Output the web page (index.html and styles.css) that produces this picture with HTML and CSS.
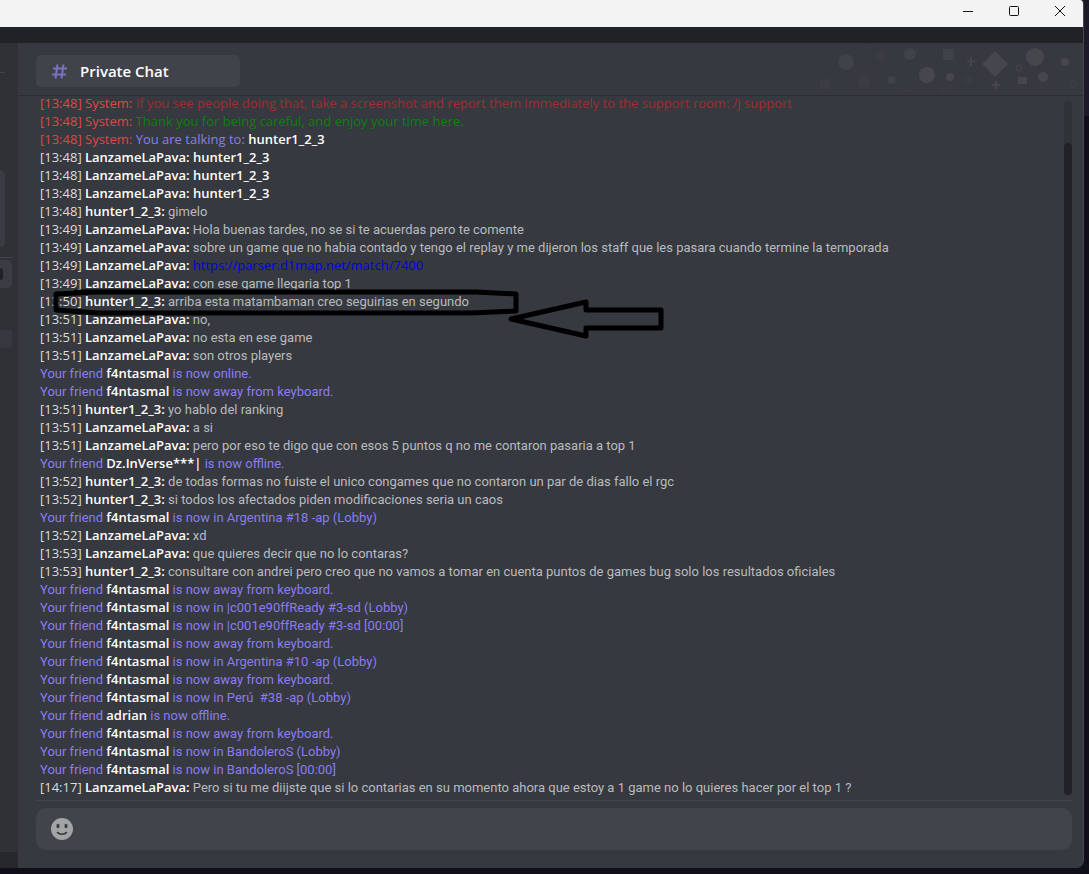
FILE: index.html
```html
<!DOCTYPE html>
<html lang="es">
<head>
    <meta charset="UTF-8">
    <meta name="viewport" content="width=device-width, initial-scale=1.0">
    <title>Private Chat</title>
    <link rel="stylesheet" href="styles.css">
</head>
<body>
    <div class="window">
        <div class="titlebar">
            <button class="window-button" aria-label="Minimize">
                <svg width="12" height="12" viewBox="0 0 12 12"><path d="M1 6.5h10" /></svg>
            </button>
            <button class="window-button" aria-label="Maximize">
                <svg width="12" height="12" viewBox="0 0 12 12"><rect x="1.5" y="1.5" width="9" height="9" rx="1" /></svg>
            </button>
            <button class="window-button" aria-label="Close">
                <svg width="12" height="12" viewBox="0 0 12 12"><path d="M1 1l10 10M11 1L1 11" /></svg>
            </button>
        </div>
        <div class="toolbar"></div>
        <div class="content">
            <div class="sidebar">
                <div class="side-line short"></div>
                <div class="side-card"></div>
                <div class="side-line"></div>
                <div class="side-item"><span class="side-dot"></span></div>
                <div class="side-row"></div>
                <div class="side-footer"></div>
            </div>
            <div class="chat">
                <div class="chat-header">
                    <div class="tab">
                        <svg class="hash" width="15" height="15" viewBox="0 0 15 15"><path d="M5.5 0.5L3.5 14.5M11.5 0.5L9.5 14.5M1 4.5h14M0 10.5h14" /></svg>
                        <h1>Private Chat</h1>
                    </div>
                    <svg class="decor" width="294" height="52" viewBox="0 0 294 52">
                        <g opacity="0.35">
                            <rect x="31" y="36" width="10" height="10" />
                            <circle cx="75" cy="39" r="6" />
                            <circle cx="92" cy="13" r="4" />
                            <path class="stroke" d="M48 35l6 6M54 35l-6 6M140 8l7 8M147 8l-7 8" />
                            <circle class="stroke" cx="77" cy="7" r="3" />
                            <circle class="stroke" cx="117" cy="45" r="3" />
                            <circle class="stroke" cx="157" cy="48" r="3" />
                        </g>
                        <g opacity="0.65">
                            <circle cx="57" cy="19" r="8" />
                            <circle cx="121" cy="11" r="6" />
                            <circle cx="102" cy="37" r="4" />
                            <rect x="154" y="6" width="11" height="11" />
                            <circle class="stroke" cx="178" cy="37" r="3" />
                            <circle class="stroke" cx="284" cy="41" r="3" />
                        </g>
                        <circle cx="138" cy="32" r="8" />
                        <circle cx="161" cy="34" r="4" />
                        <path d="M206 8l13 13-13 13-13-13z" />
                        <circle cx="246" cy="14" r="9" />
                        <circle cx="254" cy="34" r="5" />
                        <circle cx="276" cy="19" r="4" />
                        <rect x="229" y="34" width="9" height="7" />
                        <circle class="stroke" cx="230" cy="25" r="3" />
                        <path class="plus" d="M182 14v9M178 18.5h8M207 38v8M203 42h8" />
                    </svg>
                </div>
                <div class="chat-body">
                    <div class="messages">
                        <p class="system">[13:48] System: <span class="warning">If you see people doing that, take a screenshot and report them immediately to the support room: /j support</span></p>
                        <p class="system">[13:48] System: <span class="thanks">Thank you for being careful, and enjoy your time here.</span></p>
                        <p class="system">[13:48] System: <span class="info">You are talking to:</span> <b>hunter1_2_3</b></p>
                        <p><time>[13:48]</time> <b>LanzameLaPava: hunter1_2_3</b></p>
                        <p><time>[13:48]</time> <b>LanzameLaPava: hunter1_2_3</b></p>
                        <p><time>[13:48]</time> <b>LanzameLaPava: hunter1_2_3</b></p>
                        <p><time>[13:48]</time> <b>hunter1_2_3:</b> gimelo</p>
                        <p><time>[13:49]</time> <b>LanzameLaPava:</b> Hola buenas tardes, no se si te acuerdas pero te comente</p>
                        <p><time>[13:49]</time> <b>LanzameLaPava:</b> sobre un game que no habia contado y tengo el replay y me dijeron los staff que les pasara cuando termine la temporada</p>
                        <p><time>[13:49]</time> <b>LanzameLaPava:</b> <a href="https://parser.d1map.net/match/7400">https://parser.d1map.net/match/7400</a></p>
                        <p><time>[13:49]</time> <b>LanzameLaPava:</b> con ese game llegaria top 1</p>
                        <p><time>[13:50]</time> <b>hunter1_2_3:</b> arriba esta matambaman creo seguirias en segundo</p>
                        <p><time>[13:51]</time> <b>LanzameLaPava:</b> no,</p>
                        <p><time>[13:51]</time> <b>LanzameLaPava:</b> no esta en ese game</p>
                        <p><time>[13:51]</time> <b>LanzameLaPava:</b> son otros players</p>
                        <p class="info">Your friend <b>f4ntasmal</b> is now online.</p>
                        <p class="info">Your friend <b>f4ntasmal</b> is now away from keyboard.</p>
                        <p><time>[13:51]</time> <b>hunter1_2_3:</b> yo hablo del ranking</p>
                        <p><time>[13:51]</time> <b>LanzameLaPava:</b> a si</p>
                        <p><time>[13:51]</time> <b>LanzameLaPava:</b> pero por eso te digo que con esos 5 puntos q no me contaron pasaria a top 1</p>
                        <p class="info">Your friend <b>Dz.InVerse***|</b> is now offline.</p>
                        <p><time>[13:52]</time> <b>hunter1_2_3:</b> de todas formas no fuiste el unico congames que no contaron un par de dias fallo el rgc</p>
                        <p><time>[13:52]</time> <b>hunter1_2_3:</b> si todos los afectados piden modificaciones seria un caos</p>
                        <p class="info">Your friend <b>f4ntasmal</b> is now in Argentina #18 -ap (Lobby)</p>
                        <p><time>[13:52]</time> <b>LanzameLaPava:</b> xd</p>
                        <p><time>[13:53]</time> <b>LanzameLaPava:</b> que quieres decir que no lo contaras?</p>
                        <p><time>[13:53]</time> <b>hunter1_2_3:</b> consultare con andrei pero creo que no vamos a tomar en cuenta puntos de games bug solo los resultados oficiales</p>
                        <p class="info">Your friend <b>f4ntasmal</b> is now away from keyboard.</p>
                        <p class="info">Your friend <b>f4ntasmal</b> is now in |c001e90ffReady #3-sd (Lobby)</p>
                        <p class="info">Your friend <b>f4ntasmal</b> is now in |c001e90ffReady #3-sd [00:00]</p>
                        <p class="info">Your friend <b>f4ntasmal</b> is now away from keyboard.</p>
                        <p class="info">Your friend <b>f4ntasmal</b> is now in Argentina #10 -ap (Lobby)</p>
                        <p class="info">Your friend <b>f4ntasmal</b> is now away from keyboard.</p>
                        <p class="info">Your friend <b>f4ntasmal</b> is now in Perú  #38 -ap (Lobby)</p>
                        <p class="info">Your friend <b>adrian</b> is now offline.</p>
                        <p class="info">Your friend <b>f4ntasmal</b> is now away from keyboard.</p>
                        <p class="info">Your friend <b>f4ntasmal</b> is now in BandoleroS (Lobby)</p>
                        <p class="info">Your friend <b>f4ntasmal</b> is now in BandoleroS [00:00]</p>
                        <p><time>[14:17]</time> <b>LanzameLaPava:</b> Pero si tu me diijste que si lo contarias en su momento ahora que estoy a 1 game no lo quieres hacer por el top 1 ?</p>
                    </div>
                    <div class="scrollbar"><div class="thumb"></div></div>
                    <!-- hand drawn mark around the 13:50 message -->
                    <svg class="mark" width="640" height="60" viewBox="0 0 640 60">
                        <path d="M61 12L20 14V30L62 33H435L480 31V14L440 12H40" />
                        <path d="M475 39L550 22V30H625V48H550V56z" />
                    </svg>
                </div>
                <div class="composer">
                    <button class="emoji" aria-label="Emoji">
                        <svg width="22" height="22" viewBox="0 0 22 22">
                            <circle cx="11" cy="11" r="11" fill="#a3a4a5" />
                            <ellipse cx="7" cy="8" rx="1.6" ry="2.2" fill="#3b3d40" />
                            <ellipse cx="15" cy="8" rx="1.6" ry="2.2" fill="#3b3d40" />
                            <path d="M6.5 14.5Q11 18 15.5 14.5" fill="none" stroke="#3b3d40" stroke-width="1.6" stroke-linecap="round" />
                        </svg>
                    </button>
                    <input type="text" aria-label="Message">
                </div>
            </div>
        </div>
    </div>
</body>
</html>
```
FILE: styles.css
```css
body {
    margin: 0;
    height: 100vh;
    background: linear-gradient(#1c1a29 116px, #100f19 116px);
    font-family: "Open Sans", "Noto Sans", sans-serif;
    font-size: 13px;
    overflow: hidden;
}
.window {
    display: flex;
    flex-direction: column;
    height: calc(100vh - 6px);
    margin-right: 5px;
    box-sizing: border-box;
    border-right: 1px solid #45464e;
    border-radius: 0 4px 8px 0;
    background: #37393f;
    overflow: hidden;
}
.titlebar {
    display: flex;
    justify-content: flex-end;
    height: 27px;
    background: #f3f3f3;
}
.window-button {
    width: 46px;
    height: 22px;
    padding: 0;
    border: none;
    background: none;
    line-height: 0;
}
.window-button svg {
    fill: none;
    stroke: #111;
    stroke-width: 1;
}
.toolbar {
    height: 16px;
    background: #202225;
}
.content {
    flex: 1;
    display: flex;
    min-height: 0;
}
.sidebar {
    width: 18px;
    display: flex;
    flex-direction: column;
    background: #2f3136;
}
.side-line {
    width: 13px;
    height: 1px;
    margin-top: 10px;
    background: #42444a;
}
.side-line.short {
    width: 5px;
    margin-top: 29px;
}
.side-card {
    width: 5px;
    height: 77px;
    margin-top: 97px;
    border-radius: 0 5px 5px 0;
    background: #393c42;
}
.side-item {
    width: 12px;
    height: 28px;
    margin-top: 2px;
    display: flex;
    align-items: center;
    border-radius: 0 5px 5px 0;
    background: #393c42;
}
.side-dot {
    width: 3px;
    height: 12px;
    border-radius: 0 3px 3px 0;
    background: #202225;
}
.side-row {
    width: 12px;
    height: 18px;
    margin-top: 42px;
    border-radius: 0 3px 3px 0;
    background: #36393f;
}
.side-footer {
    height: 16px;
    margin-top: auto;
    background: #26282c;
}
.chat {
    flex: 1;
    min-width: 0;
    display: flex;
    flex-direction: column;
    background: #36393f;
}
.chat-header {
    display: flex;
    align-items: center;
    justify-content: space-between;
    height: 52px;
    padding-left: 18px;
    border-bottom: 1px solid #2b2d31;
}
.tab {
    display: flex;
    align-items: center;
    gap: 13px;
    width: 188px;
    height: 32px;
    margin-top: 4px;
    padding-left: 16px;
    border-radius: 5px;
    background: #40434a;
}
.tab h1 {
    margin: 0;
    font-size: 15px;
    font-weight: 600;
    color: #fff;
}
.hash {
    fill: none;
    stroke: #7873c0;
    stroke-width: 2;
}
.decor {
    fill: #45474c;
}
.decor .stroke {
    fill: none;
    stroke: #45474c;
    stroke-width: 1;
}
.decor .plus {
    stroke: #45474c;
    stroke-width: 2;
}
.chat-body {
    position: relative;
    flex: 1;
    min-height: 0;
    display: flex;
    margin: 0 11px 0 18px;
    border-bottom: 1px solid #45474d;
}
.messages {
    flex: 1;
    min-width: 0;
    display: flex;
    flex-direction: column;
    justify-content: flex-end;
    padding: 0 4px 4px;
    overflow: hidden;
}
.messages p {
    flex: none;
    height: 18px;
    margin: 0;
    font-family: Roboto, sans-serif;
    line-height: 18px;
    white-space: pre;
    color: #b9bbbe;
}
.messages time,
.messages b,
.messages a,
.messages .system {
    font-family: "Open Sans", "Noto Sans", sans-serif;
}
.messages time {
    color: #dcddde;
}
.messages b {
    font-weight: 600;
    color: #fff;
}
.messages a {
    color: #0000e6;
    text-decoration: none;
}
.messages .system {
    color: #e04545;
}
.messages .warning {
    color: #a02c30;
}
.messages .thanks {
    color: #0b810b;
}
.messages .info {
    color: #8a7df0;
}
.scrollbar {
    width: 8px;
    margin: 5px 0 5px;
    border-radius: 4px;
    background: #2e3338;
}
.thumb {
    height: calc(100% - 42px);
    margin-top: 42px;
    border-radius: 4px;
    background: #202225;
}
.mark {
    position: absolute;
    top: 184px;
    left: 0;
    fill: none;
    stroke: #000;
    stroke-width: 5;
    stroke-linejoin: round;
    stroke-linecap: round;
    pointer-events: none;
}
.composer {
    display: flex;
    align-items: center;
    gap: 12px;
    height: 42px;
    margin: 7px 11px 18px 18px;
    padding: 0 15px;
    border-radius: 10px;
    background: #40444b;
}
.emoji {
    padding: 0;
    border: none;
    background: none;
    line-height: 0;
}
.composer input {
    flex: 1;
    border: none;
    outline: none;
    background: none;
    color: #dcddde;
    font: inherit;
}
```
